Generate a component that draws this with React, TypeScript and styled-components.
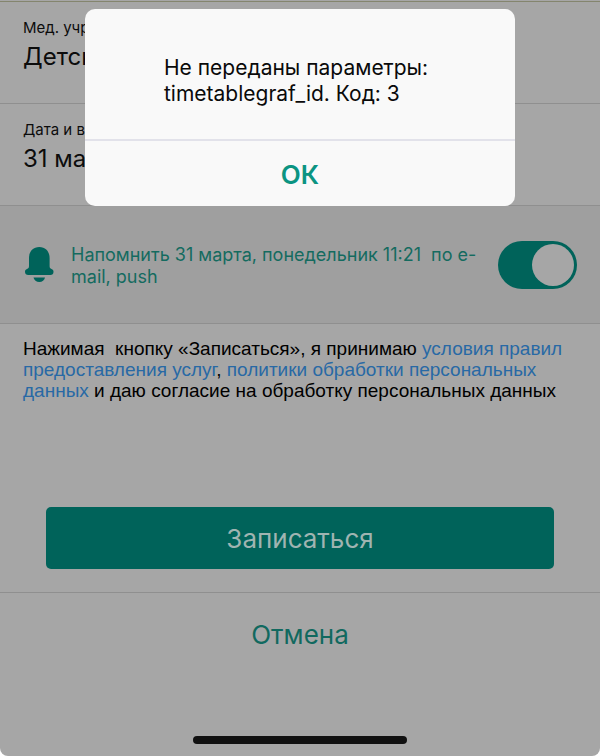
import React, { useState } from "react";
import styled, { createGlobalStyle } from "styled-components";

const GlobalStyle = createGlobalStyle`
  *, *::before, *::after { box-sizing: border-box; }
  body {
    margin: 0;
    background: #ffffff;
    font-family: Inter, "Liberation Sans", sans-serif;
    color: #0c0c0c;
  }
`;

const line = "#8f8f8f";
const teal = "#00635a";

const Screen = styled.main`
  position: relative;
  display: flex;
  flex-direction: column;
  min-height: 100vh;
  overflow: hidden;
  padding-top: 1px;
  background: #a6a6a6;
  border-radius: 0 0 8px 8px;
`;

const Details = styled.dl`
  margin: 0;
  border-top: 1px solid #84856e;
`;

const Field = styled.div`
  height: 102px;
  padding: 16px 23px 0;
  border-bottom: 1px solid ${line};
`;

const FieldName = styled.dt`
  font-size: 15px;
  line-height: 20px;
`;

const FieldValue = styled.dd`
  margin: 3px 0 0;
  font-size: 24px;
  line-height: 32px;
`;

const Reminder = styled.label`
  display: flex;
  align-items: center;
  min-height: 118px;
  padding: 0 23px;
  background: #9f9f9f;
  border-bottom: 1px solid ${line};
  color: #146b5f;
  cursor: pointer;
`;

const BellIcon = styled.svg`
  flex: none;
  width: 32px;
  height: 38px;
  margin-right: 16px;
  fill: ${teal};
`;

const ReminderText = styled.span`
  flex: 1;
  padding-top: 2px;
  font-size: 18px;
  line-height: 22px;
`;

const Switch = styled.input`
  flex: none;
  appearance: none;
  width: 79px;
  height: 48px;
  margin: 0;
  padding: 3px;
  border-radius: 24px;
  background: #858585;
  cursor: pointer;

  &::before {
    content: "";
    display: block;
    width: 42px;
    height: 42px;
    border-radius: 50%;
    background: #a6a6a6;
  }

  &:checked {
    background: ${teal};
  }

  &:checked::before {
    margin-left: auto;
  }
`;

const Consent = styled.p`
  margin: 0;
  padding: 14px 23px 0;
  font-family: "Liberation Sans", Arial, sans-serif;
  font-size: 19px;
  line-height: 21px;
  color: #000000;
`;

const TermsLink = styled.a`
  color: #2869a5;
  text-decoration: none;
`;

const Actions = styled.div`
  display: flex;
  flex-direction: column;
  margin-top: 106px;
`;

const SubmitButton = styled.button`
  height: 62px;
  margin: 0 46px 23px;
  border: 0;
  border-radius: 5px;
  background: ${teal};
  color: #9fb4b1;
  font: 26px Inter, "Liberation Sans", sans-serif;
  cursor: pointer;
`;

const CancelButton = styled.button`
  height: 84px;
  padding: 0;
  border: 0;
  border-top: 1px solid ${line};
  background: none;
  color: #11695f;
  font: 26px Inter, "Liberation Sans", sans-serif;
  cursor: pointer;
`;

const HomeIndicator = styled.div`
  width: 214px;
  height: 8px;
  margin: auto auto 12px;
  border-radius: 4px;
  background: #111111;
`;

const Overlay = styled.div`
  position: absolute;
  inset: 0;
  display: flex;
  align-items: flex-start;
  justify-content: center;
  padding: 9px 24px 0;
`;

const Dialog = styled.div`
  display: flex;
  flex-direction: column;
  width: 100%;
  max-width: 430px;
  overflow: hidden;
  border-radius: 10px;
  background: #f9f9f9;
`;

const DialogMessage = styled.p`
  width: 100%;
  max-width: 320px;
  margin: 0 auto;
  padding: 46px 24px 32px;
  font-size: 21px;
  line-height: 26px;
  color: #0a0a0a;
`;

const DialogButton = styled.button`
  height: 67px;
  padding: 2px 0 0;
  border: 0;
  border-top: 2px solid #e2e2ea;
  background: none;
  color: #0b9482;
  font: 600 26px Inter, "Liberation Sans", sans-serif;
  cursor: pointer;
`;

export default function App() {
  const [remind, setRemind] = useState(true);
  const [open, setOpen] = useState(true);

  return (
    <>
      <GlobalStyle />
      <Screen>
        <Details>
          <Field>
            <FieldName>Мед. учреждение</FieldName>
            <FieldValue>Детская</FieldValue>
          </Field>
          <Field>
            <FieldName>Дата и время</FieldName>
            <FieldValue>31 марта</FieldValue>
          </Field>
        </Details>

        <Reminder>
          <BellIcon viewBox="0 0 32 38" aria-hidden="true">
            <path d="M16.300 1C9.800 1 6 5.800 6 12V20C6 21.800 5.300 22.500 4 23C2.700 23.600 2 24.400 2 25.800C2 27.900 3.400 29 5.200 29H27.400C29.300 29 30.500 27.900 30.500 25.800C30.500 24.400 29.800 23.600 28.500 23C27.200 22.500 26.600 21.800 26.600 20V12C26.600 5.800 22.800 1 16.300 1Z" />
            <path d="M10.500 31.500H22C21.600 34.200 19.200 36 16.300 36S11 34.200 10.500 31.500Z" />
          </BellIcon>
          <ReminderText>
            Напомнить 31 марта, понедельник 11:21{"\u00a0 "}по e-mail, push
          </ReminderText>
          <Switch
            type="checkbox"
            role="switch"
            checked={remind}
            onChange={(e) => setRemind(e.target.checked)}
          />
        </Reminder>

        <Consent>
          Нажимая{"\u00a0 "}кнопку «Записаться», я принимаю{" "}
          <TermsLink href="#terms">условия правил предоставления услуг</TermsLink>,{" "}
          <TermsLink href="#privacy">политики обработки персональных данных</TermsLink> и
          даю согласие на обработку персональных данных
        </Consent>

        <Actions>
          <SubmitButton type="button">Записаться</SubmitButton>
          <CancelButton type="button">Отмена</CancelButton>
        </Actions>

        <HomeIndicator />

        {open && (
          <Overlay>
            <Dialog role="alertdialog" aria-modal="true" aria-describedby="message">
              <DialogMessage id="message">
                Не переданы параметры:
                <br />
                timetablegraf_id. Код: 3
              </DialogMessage>
              <DialogButton type="button" onClick={() => setOpen(false)}>
                ОК
              </DialogButton>
            </Dialog>
          </Overlay>
        )}
      </Screen>
    </>
  );
}
